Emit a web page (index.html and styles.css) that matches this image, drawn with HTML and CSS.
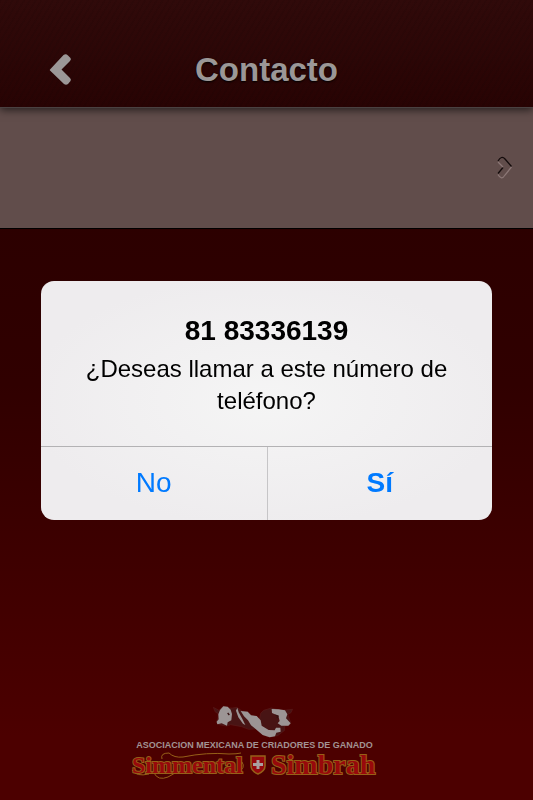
FILE: index.html
```html
<!DOCTYPE html>
<html lang="es">
<head>
<meta charset="utf-8">
<meta name="viewport" content="width=device-width, initial-scale=1">
<title>Contacto</title>
<link rel="stylesheet" href="styles.css">
</head>
<body>
<div class="screen">
  <header class="bar">
    <button class="back" type="button" aria-label="Atrás">
      <svg width="24" height="34" viewBox="0 0 24 34" aria-hidden="true">
        <path d="M1 16.500 L14.500 2 Q17 .500 19 2.500 L21.500 5 Q22.500 6.500 21 8 L12.500 16.500 L21 25 Q22.500 26.500 21.500 28 L19 31 Q17 32.500 15 31 L1 17.500 Q.500 17 1 16.500Z" fill="#9b9797"/>
      </svg>
    </button>
    <h1 class="title">Contacto</h1>
  </header>
  <main class="content">
    <a class="row" href="#telefono" aria-label="Teléfono">
      <svg width="16" height="24" viewBox="0 0 16 24" fill="none" stroke-width="1.300" aria-hidden="true">
        <path d="M1 5 Q4.500 -1 8 3 L14.500 10.500 M1 17.500 L6 11.500" stroke="#130b0b"/>
        <path d="M14.500 11 L8 19 Q4.500 25 1 18.500 M1 6 L6 11" stroke="#8b7776"/>
      </svg>
    </a>
  </main>
  <footer class="brand">
    <svg class="map" width="80" height="34" viewBox="35 18 240 102" aria-hidden="true">
      <path d="M36 22 L53 31 L64 20 L84 24 L94 24 L107 22 L123 34 L139 35 L150 46 L165 49 L174 60 L178 40 L187 31 L210 24 L237 31 L253 30 L274 28 L268 39 L259 43 L268 68 L264 75 L250 78 L250 91 L229 107 L205 111 L186 105 L163 87 L142 88 L121 80 L88 74 L76 78 L53 74 L45 67 L50 54 L51 41 L42 36Z" fill="#481414" stroke="#5a1a1a" stroke-width="2"/>
      <path d="M56 30 L66 19 L79 20 L88 29 L92 42 L90 61 L79 67 L77 77 L61 70 L48 73 L46 65 L52 58 L51 43Z" fill="#9c9595"/>
      <path d="M108 23 L112 37 L122 55 L132 75 L125 71 L111 52 L104 32 Z M118 33 L139 35 L149 46 L166 48 L178 61 L181 77 L202 90 L220 91 L224 83 L237 83 L238 95 L225 98 L221 109 L205 112 L184 105 L163 87 L149 76 L140 61 L128 49Z" fill="#9c9595"/>
      <path d="M211 27 L232 28 L251 31 L258 43 L254 55 L268 70 L261 77 L240 77 L229 70 L235 63 L231 47 L212 39Z" fill="#9c9595"/>
      <path d="M79 39 L84 45 M222 45 L230 48 L227 54" fill="none" stroke="#351010" stroke-width="4"/>
    </svg>
    <p class="association">ASOCIACION MEXICANA DE CRIADORES DE GANADO</p>
    <svg class="names" width="260" height="32" viewBox="0 0 260 32" role="img" aria-label="Simmental Simbrah">
      <g class="wordmark">
        <path d="M31 9 Q29 3 38 3 Q43 8 52 7 Q76 2 98 4 Q106 4 110 3 M1 20 Q5 27 18 24 M23 23 Q27 31 37 27 L44 23 M107 22 Q115 18 111 12 L107 14" class="flourish"/>
        <text x="1" y="23" class="simmental">Simmental</text>
        <text x="140" y="24" class="simbrah">Simbrah</text>
      </g>
      <path d="M120 6 H134 V16 Q134 21 127 24 Q120 21 120 16Z" fill="#97080d" stroke="#966018" stroke-width="1.500"/>
      <path d="M127 10 V19 M122 14.500 H132" stroke="#aaa0a0" stroke-width="3"/>
    </svg>
  </footer>
</div>
<div class="overlay">
  <section class="alert" role="alertdialog" aria-modal="true" aria-labelledby="phone" aria-describedby="question">
    <div class="message">
      <h2 class="phone" id="phone">81 83336139</h2>
      <p class="question" id="question">¿Deseas llamar a este número de teléfono?</p>
    </div>
    <div class="actions">
      <button class="action" type="button">No</button>
      <button class="action primary" type="button">Sí</button>
    </div>
  </section>
</div>
</body>
</html>
```
FILE: styles.css
```css
* {
  box-sizing: border-box;
}

body,
h1,
h2,
p {
  margin: 0;
}

body {
  font-family: "Liberation Sans", Arial, sans-serif;
}

button {
  padding: 0;
  border: 0;
  background: none;
  font-family: inherit;
  cursor: pointer;
}

.screen {
  display: flex;
  flex-direction: column;
  min-height: 100vh;
  background: linear-gradient(#2c0000 28%, #300000 48%, #4c0000 92%);
}

.bar {
  position: relative;
  display: grid;
  grid-template-columns: 73px 1fr 73px;
  align-items: center;
  padding: 32px 0 0;
  height: 108px;
  border-bottom: 1px solid #4a4141;
  background:
    repeating-linear-gradient(120deg, #00000010 0 2px, #00000000 2px 5px),
    linear-gradient(#300a0a, #280303);
  box-shadow: 0 2px 8px #000000a0;
}

.back {
  display: flex;
  justify-content: flex-end;
}

.title {
  color: #9b9797;
  font-size: 33px;
  line-height: 40px;
  text-align: center;
  text-shadow: 0 1px 2px #000000;
}

.row {
  display: flex;
  align-items: center;
  justify-content: flex-end;
  height: 121px;
  padding: 0 20px;
  border-bottom: 1px solid #000000;
  background: #614d4b;
}

.brand {
  display: flex;
  flex-direction: column;
  align-items: center;
  margin-top: auto;
  padding-bottom: 18px;
}

.map {
  margin-right: 28px;
}

.association {
  color: #a29494;
  font-size: 9px;
  font-weight: bold;
  line-height: 10px;
  padding-right: 24px;
  white-space: nowrap;
}

.names {
  margin-right: 12px;
}

.wordmark {
  font-family: "Liberation Serif", serif;
  font-weight: bold;
  fill: #98080b;
  stroke: #966018;
  stroke-width: 2px;
  paint-order: stroke;
}

.simmental {
  font-size: 24px;
}

.simbrah {
  font-size: 28px;
}

.flourish {
  fill: none;
  stroke-width: 1px;
}

.overlay {
  position: fixed;
  inset: 0;
  display: flex;
  align-items: center;
  padding: 0 41px;
}

.alert {
  flex: 1;
  overflow: hidden;
  border-radius: 13px;
  background: radial-gradient(ellipse, #f5f5f5, #eeecee 75%);
}

.message {
  padding: 32px 40px 29px;
  color: #000000;
  text-align: center;
}

.phone {
  font-size: 28px;
  line-height: 36px;
}

.question {
  padding-top: 4px;
  font-size: 24px;
  line-height: 32px;
}

.actions {
  display: grid;
  grid-template-columns: 1fr 1fr;
  border-top: 1px solid #b3b2b4;
}

.action {
  height: 73px;
  color: #007aff;
  font-size: 28px;
  line-height: 36px;
}

.primary {
  border-left: 1px solid #c6c5c7;
  font-weight: bold;
}
```
